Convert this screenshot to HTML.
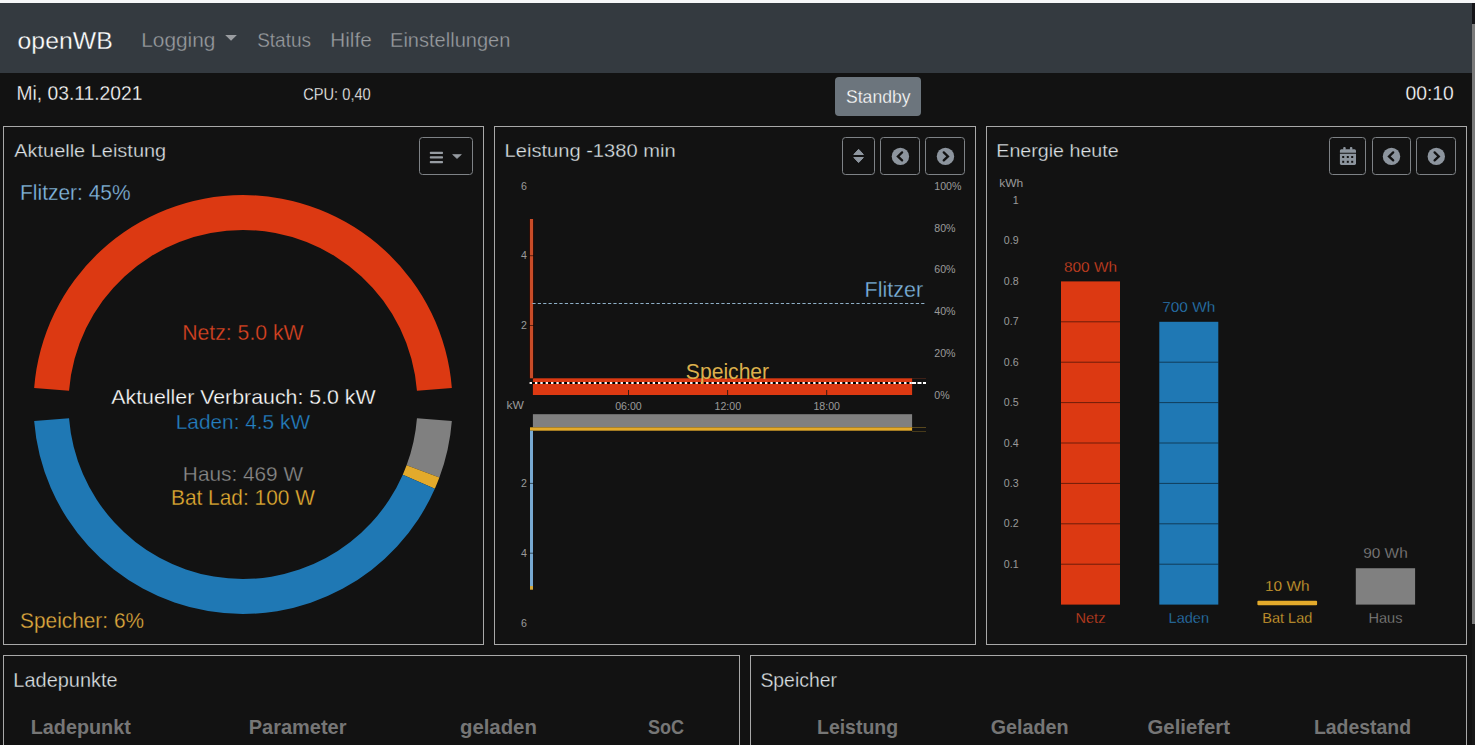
<!DOCTYPE html>
<html lang="de"><head><meta charset="utf-8"><title>openWB</title>
<style>
html,body{margin:0;padding:0;background:#121212;overflow:hidden;}
body{width:1475px;height:745px;position:relative;font-family:"Liberation Sans",sans-serif;}
.abs{position:absolute;box-sizing:border-box;}
.topstrip{left:0;top:0;width:1475px;height:3px;background:#f6f7f9;}
nav.navbar{left:0;top:3px;width:1472px;height:70px;background:#343a40;}
.scroll-track-top{left:1472px;top:3px;width:3px;height:21px;background:#141418;}
.scroll-thumb{left:1472px;top:24px;width:3px;height:600px;background:#7a7a7a;}
.scroll-track{left:1472px;top:624px;width:3px;height:121px;background:#171717;}
.standby{left:835px;top:77px;width:86px;height:39px;border-radius:4px;background:#6c757d;}
.card{border:1px solid #a8a8a8;background:transparent;}
svg{position:absolute;left:0;top:0;font-family:"Liberation Sans",sans-serif;}
</style></head><body>
<div class="abs topstrip"></div>
<nav class="abs navbar"></nav>
<div class="abs scroll-track-top"></div><div class="abs scroll-thumb"></div><div class="abs scroll-track"></div>
<div class="abs standby"></div>
<div class="abs card" style="left:3px;top:126px;width:481px;height:519px"></div>
<div class="abs card" style="left:494px;top:126px;width:482px;height:519px"></div>
<div class="abs card" style="left:986px;top:126px;width:481px;height:519px"></div>
<div class="abs card" style="left:3px;top:655px;width:737px;height:120px"></div>
<div class="abs card" style="left:750px;top:655px;width:717px;height:120px"></div>
<svg width="1475" height="745" viewBox="0 0 1475 745">
<text x="17.56" y="49.00" font-size="24.71" fill="#ffffff" text-anchor="start" font-weight="normal" textLength="95.15" lengthAdjust="spacingAndGlyphs" stroke="#343a40" stroke-width="0.3">openWB</text>
<text x="141.29" y="47.20" font-size="19.48" fill="#9a9da1" text-anchor="start" font-weight="normal" textLength="74.15" lengthAdjust="spacingAndGlyphs" stroke="#343a40" stroke-width="0.3">Logging</text>
<path d="M225.2 34.9 L236.9 34.9 L231.05 40.8 Z" fill="#9a9da1"/>
<text x="257.14" y="47.20" font-size="19.48" fill="#9a9da1" text-anchor="start" font-weight="normal" textLength="53.85" lengthAdjust="spacingAndGlyphs" stroke="#343a40" stroke-width="0.3">Status</text>
<text x="330.30" y="47.20" font-size="19.48" fill="#9a9da1" text-anchor="start" font-weight="normal" textLength="41.42" lengthAdjust="spacingAndGlyphs" stroke="#343a40" stroke-width="0.3">Hilfe</text>
<text x="390.06" y="47.20" font-size="19.48" fill="#9a9da1" text-anchor="start" font-weight="normal" textLength="120.35" lengthAdjust="spacingAndGlyphs" stroke="#343a40" stroke-width="0.3">Einstellungen</text>
<text x="16.54" y="100.30" font-size="19.77" fill="#ffffff" text-anchor="start" font-weight="normal" textLength="125.79" lengthAdjust="spacingAndGlyphs" stroke="#121212" stroke-width="0.3">Mi, 03.11.2021</text>
<text x="303.16" y="99.90" font-size="15.84" fill="#ffffff" text-anchor="start" font-weight="normal" textLength="67.62" lengthAdjust="spacingAndGlyphs" stroke="#121212" stroke-width="0.3">CPU: 0,40</text>
<text x="1405.45" y="99.80" font-size="19.77" fill="#ffffff" text-anchor="start" font-weight="normal" textLength="48.31" lengthAdjust="spacingAndGlyphs" stroke="#121212" stroke-width="0.3">00:10</text>
<text x="846.00" y="103.20" font-size="18.90" fill="#ffffff" text-anchor="start" font-weight="normal" textLength="64.53" lengthAdjust="spacingAndGlyphs" stroke="#6c757d" stroke-width="0.3">Standby</text>
<text x="14.26" y="157.00" font-size="18.90" fill="#dee2e6" text-anchor="start" font-weight="normal" textLength="151.92" lengthAdjust="spacingAndGlyphs" stroke="#121212" stroke-width="0.3">Aktuelle Leistung</text>
<text x="504.55" y="156.70" font-size="18.90" fill="#dee2e6" text-anchor="start" font-weight="normal" textLength="171.06" lengthAdjust="spacingAndGlyphs" stroke="#121212" stroke-width="0.3">Leistung -1380 min</text>
<text x="996.29" y="156.70" font-size="18.90" fill="#dee2e6" text-anchor="start" font-weight="normal" textLength="122.39" lengthAdjust="spacingAndGlyphs" stroke="#121212" stroke-width="0.3">Energie heute</text>
<rect x="419.5" y="137.5" width="53" height="37" rx="3" fill="none" stroke="#7e8286" stroke-width="1"/>
<rect x="429.8" y="151.70000000000002" width="13.2" height="2.2" fill="#979ca2" rx="0.7"/>
<rect x="429.8" y="156.20000000000002" width="13.2" height="2.2" fill="#979ca2" rx="0.7"/>
<rect x="429.8" y="161.0" width="13.2" height="2.2" fill="#979ca2" rx="0.7"/>
<path d="M452.6 154.5 L461.4 154.5 L457 158.6 Z" fill="#979ca2" stroke="#979ca2" stroke-width="0.6" stroke-linejoin="round"/>
<rect x="842.5" y="137.5" width="32" height="37" rx="3" fill="none" stroke="#7e8286" stroke-width="1"/>
<rect x="880.5" y="137.5" width="39" height="37" rx="3" fill="none" stroke="#7e8286" stroke-width="1"/>
<rect x="925.5" y="137.5" width="39" height="37" rx="3" fill="none" stroke="#7e8286" stroke-width="1"/>
<path d="M853.8 154.5 L863.4 154.5 L858.6 149.3 Z M853.8 157.5 L863.4 157.5 L858.6 162.6 Z" fill="#8d959e" stroke="#8d959e" stroke-width="1" stroke-linejoin="round"/>
<circle cx="900.4" cy="156.4" r="8.7" fill="#8d959e"/>
<path d="M902.10 152.40 L897.90 156.40 L902.10 160.40" fill="none" stroke="#121212" stroke-width="2.3" stroke-linecap="round" stroke-linejoin="miter"/>
<circle cx="945.45" cy="156.4" r="8.7" fill="#8d959e"/>
<path d="M943.75 152.40 L947.95 156.40 L943.75 160.40" fill="none" stroke="#121212" stroke-width="2.3" stroke-linecap="round" stroke-linejoin="miter"/>
<rect x="1329.5" y="137.5" width="36" height="37" rx="3" fill="none" stroke="#7e8286" stroke-width="1"/>
<rect x="1372.5" y="137.5" width="38" height="37" rx="3" fill="none" stroke="#7e8286" stroke-width="1"/>
<rect x="1416.5" y="137.5" width="39" height="37" rx="3" fill="none" stroke="#7e8286" stroke-width="1"/>
<circle cx="1391.5" cy="156.4" r="8.7" fill="#8d959e"/>
<path d="M1393.20 152.40 L1389.00 156.40 L1393.20 160.40" fill="none" stroke="#121212" stroke-width="2.3" stroke-linecap="round" stroke-linejoin="miter"/>
<circle cx="1436.3" cy="156.4" r="8.7" fill="#8d959e"/>
<path d="M1434.60 152.40 L1438.80 156.40 L1434.60 160.40" fill="none" stroke="#121212" stroke-width="2.3" stroke-linecap="round" stroke-linejoin="miter"/>
<path d="M1339.9 150.8 a1.5 1.5 0 0 1 1.5 -1.5 h13.1 a1.5 1.5 0 0 1 1.5 1.5 v2.0 h-16.1 Z" fill="#8d959e"/>
<path d="M1339.9 153.8 h16.1 v9.8 a1.4 1.4 0 0 1 -1.4 1.4 h-13.3 a1.4 1.4 0 0 1 -1.4 -1.4 Z" fill="#8d959e"/>
<rect x="1343.2" y="147" width="2.5" height="3" rx="1" fill="#8d959e"/>
<rect x="1349.9" y="147" width="2.5" height="3" rx="1" fill="#8d959e"/>
<rect x="1342.2" y="156.0" width="2.0" height="2.0" fill="#121212"/>
<rect x="1342.2" y="160.8" width="2.0" height="2.0" fill="#121212"/>
<rect x="1346.8" y="156.0" width="2.0" height="2.0" fill="#121212"/>
<rect x="1346.8" y="160.8" width="2.0" height="2.0" fill="#121212"/>
<rect x="1351.2" y="156.0" width="2.0" height="2.0" fill="#121212"/>
<rect x="1351.2" y="160.8" width="2.0" height="2.0" fill="#121212"/>
<path d="M451.85 388.06 A209.5 209.5 0 0 0 34.15 388.06 L69.04 390.81 A174.5 174.5 0 0 1 416.96 390.81 Z" fill="#dc3912"/>
<path d="M451.85 420.94 A209.5 209.5 0 0 1 439.36 477.53 L406.56 465.33 A174.5 174.5 0 0 0 416.96 418.19 Z" fill="#808080"/>
<path d="M439.36 477.53 A209.5 209.5 0 0 1 434.83 488.71 L402.78 474.64 A174.5 174.5 0 0 0 406.56 465.33 Z" fill="#e3aa2b"/>
<path d="M434.83 488.71 A209.5 209.5 0 0 1 34.15 420.94 L69.04 418.19 A174.5 174.5 0 0 0 402.78 474.64 Z" fill="#1f78b4"/>
<text x="20.08" y="200.00" font-size="22.53" fill="#84b9e0" text-anchor="start" font-weight="normal" textLength="110.46" lengthAdjust="spacingAndGlyphs" stroke="#121212" stroke-width="0.3">Flitzer: 45%</text>
<text x="20.05" y="628.00" font-size="22.97" fill="#e0ab3e" text-anchor="start" font-weight="normal" textLength="123.99" lengthAdjust="spacingAndGlyphs" stroke="#121212" stroke-width="0.3">Speicher: 6%</text>
<text x="182.26" y="339.60" font-size="21.51" fill="#dc4422" text-anchor="start" font-weight="normal" textLength="121.31" lengthAdjust="spacingAndGlyphs" stroke="#121212" stroke-width="0.3">Netz: 5.0 kW</text>
<text x="111.26" y="404.40" font-size="20.49" fill="#ffffff" text-anchor="start" font-weight="normal" textLength="264.41" lengthAdjust="spacingAndGlyphs" stroke="#121212" stroke-width="0.3">Aktueller Verbrauch: 5.0 kW</text>
<text x="175.79" y="429.20" font-size="20.93" fill="#2580c3" text-anchor="start" font-weight="normal" textLength="134.28" lengthAdjust="spacingAndGlyphs" stroke="#121212" stroke-width="0.3">Laden: 4.5 kW</text>
<text x="182.89" y="480.50" font-size="20.49" fill="#8a8a8a" text-anchor="start" font-weight="normal" textLength="120.18" lengthAdjust="spacingAndGlyphs" stroke="#121212" stroke-width="0.3">Haus: 469 W</text>
<text x="170.99" y="505.30" font-size="21.80" fill="#e3ad33" text-anchor="start" font-weight="normal" textLength="143.88" lengthAdjust="spacingAndGlyphs" stroke="#121212" stroke-width="0.3">Bat Lad: 100 W</text>
<text x="527.00" y="190.00" font-size="10.61" fill="#9a9a9a" text-anchor="end" font-weight="normal">6</text>
<text x="527.00" y="259.10" font-size="10.61" fill="#9a9a9a" text-anchor="end" font-weight="normal">4</text>
<text x="527.00" y="328.80" font-size="10.61" fill="#9a9a9a" text-anchor="end" font-weight="normal">2</text>
<text x="527.00" y="487.30" font-size="10.61" fill="#9a9a9a" text-anchor="end" font-weight="normal">2</text>
<text x="527.00" y="557.40" font-size="10.61" fill="#9a9a9a" text-anchor="end" font-weight="normal">4</text>
<text x="527.00" y="627.00" font-size="10.61" fill="#9a9a9a" text-anchor="end" font-weight="normal">6</text>
<text x="506.59" y="409.00" font-size="10.61" fill="#9a9a9a" text-anchor="start" font-weight="normal" textLength="17.35" lengthAdjust="spacingAndGlyphs">kW</text>
<text x="934.30" y="190.10" font-size="10.61" fill="#9a9a9a" text-anchor="start" font-weight="normal">100%</text>
<text x="934.30" y="231.50" font-size="10.61" fill="#9a9a9a" text-anchor="start" font-weight="normal">80%</text>
<text x="934.30" y="273.40" font-size="10.61" fill="#9a9a9a" text-anchor="start" font-weight="normal">60%</text>
<text x="934.30" y="315.20" font-size="10.61" fill="#9a9a9a" text-anchor="start" font-weight="normal">40%</text>
<text x="934.30" y="357.10" font-size="10.61" fill="#9a9a9a" text-anchor="start" font-weight="normal">20%</text>
<text x="934.30" y="398.90" font-size="10.61" fill="#9a9a9a" text-anchor="start" font-weight="normal">0%</text>
<text x="628.50" y="409.90" font-size="10.61" fill="#9a9a9a" text-anchor="middle" font-weight="normal">06:00</text>
<text x="727.80" y="409.90" font-size="10.61" fill="#9a9a9a" text-anchor="middle" font-weight="normal">12:00</text>
<text x="826.70" y="409.90" font-size="10.61" fill="#9a9a9a" text-anchor="middle" font-weight="normal">18:00</text>
<rect x="532.9" y="378.3" width="379.2" height="16.7" fill="#dc3912"/>
<rect x="529.3" y="219" width="4.4" height="159.3" fill="#3a0c02"/>
<rect x="530" y="219" width="3" height="159.3" fill="#c84c28"/>
<line x1="532.4" y1="303.5" x2="925.5" y2="303.5" stroke="#8fb0c8" stroke-width="1" stroke-dasharray="3.2 2.2"/>
<line x1="530" y1="383" x2="912" y2="383" stroke="#000" stroke-width="2"/>
<line x1="529.6" y1="383" x2="912" y2="383" stroke="#fff6f2" stroke-width="2" stroke-dasharray="2.4 2.95"/>
<line x1="912" y1="383" x2="926" y2="383" stroke="#ffffff" stroke-width="2" stroke-dasharray="4 1.5"/>
<rect x="912" y="378" width="14" height="1" fill="#5a2a1a" fill-opacity="0.6"/>
<rect x="912" y="427" width="14" height="1" fill="#6a5520" fill-opacity="0.8"/>
<rect x="912" y="431" width="14" height="1" fill="#6a5520" fill-opacity="0.6"/>
<rect x="532.9" y="414.2" width="379.2" height="13" fill="#808080"/>
<rect x="530" y="427.3" width="382.1" height="3.4" fill="#e3aa2b"/>
<rect x="530" y="430.7" width="3" height="155.3" fill="#78aad2"/>
<rect x="530" y="586" width="3" height="3.7" fill="#d4a83a"/>
<rect x="529.3" y="255.2" width="4.4" height="1" fill="#000" fill-opacity="0.55"/>
<rect x="529.3" y="325.0" width="4.4" height="1" fill="#000" fill-opacity="0.55"/>
<rect x="529.3" y="482.9" width="4.4" height="1" fill="#000" fill-opacity="0.55"/>
<rect x="529.3" y="552.7" width="4.4" height="1" fill="#000" fill-opacity="0.55"/>
<rect x="628.0" y="390" width="1" height="5" fill="#3a1a10"/>
<rect x="727.1" y="390" width="1" height="5" fill="#3a1a10"/>
<rect x="826.2" y="390" width="1" height="5" fill="#3a1a10"/>
<text x="864.54" y="296.90" font-size="21.80" fill="#7db4de" text-anchor="start" font-weight="normal" textLength="58.52" lengthAdjust="spacingAndGlyphs" stroke="#121212" stroke-width="0.3">Flitzer</text>
<text x="685.84" y="378.60" font-size="21.80" fill="#dcb04c" text-anchor="start" font-weight="normal" textLength="83.31" lengthAdjust="spacingAndGlyphs">Speicher</text>
<text x="999.19" y="186.50" font-size="10.76" fill="#9a9a9a" text-anchor="start" font-weight="normal" textLength="24.09" lengthAdjust="spacingAndGlyphs">kWh</text>
<text x="1018.60" y="567.85" font-size="10.61" fill="#9a9a9a" text-anchor="end" font-weight="normal">0.1</text>
<text x="1018.60" y="527.40" font-size="10.61" fill="#9a9a9a" text-anchor="end" font-weight="normal">0.2</text>
<text x="1018.60" y="486.95" font-size="10.61" fill="#9a9a9a" text-anchor="end" font-weight="normal">0.3</text>
<text x="1018.60" y="446.50" font-size="10.61" fill="#9a9a9a" text-anchor="end" font-weight="normal">0.4</text>
<text x="1018.60" y="406.05" font-size="10.61" fill="#9a9a9a" text-anchor="end" font-weight="normal">0.5</text>
<text x="1018.60" y="365.60" font-size="10.61" fill="#9a9a9a" text-anchor="end" font-weight="normal">0.6</text>
<text x="1018.60" y="325.15" font-size="10.61" fill="#9a9a9a" text-anchor="end" font-weight="normal">0.7</text>
<text x="1018.60" y="284.70" font-size="10.61" fill="#9a9a9a" text-anchor="end" font-weight="normal">0.8</text>
<text x="1018.60" y="244.25" font-size="10.61" fill="#9a9a9a" text-anchor="end" font-weight="normal">0.9</text>
<text x="1018.60" y="203.80" font-size="10.61" fill="#9a9a9a" text-anchor="end" font-weight="normal">1</text>
<rect x="1061" y="281.4" width="59" height="323.20000000000005" fill="#dc3912"/>
<text x="1090.50" y="271.60" font-size="15.41" fill="#dc4422" text-anchor="middle" font-weight="normal" stroke="#121212" stroke-width="0.3">800 Wh</text>
<text x="1090.50" y="622.70" font-size="14.54" fill="#dc4422" text-anchor="middle" font-weight="normal" stroke="#121212" stroke-width="0.3">Netz</text>
<rect x="1159.3" y="321.80000000000007" width="59.0" height="282.79999999999995" fill="#1f78b4"/>
<text x="1188.80" y="312.00" font-size="15.41" fill="#2a7fbf" text-anchor="middle" font-weight="normal" stroke="#121212" stroke-width="0.3">700 Wh</text>
<text x="1188.80" y="622.70" font-size="14.54" fill="#2a7fbf" text-anchor="middle" font-weight="normal" stroke="#121212" stroke-width="0.3">Laden</text>
<rect x="1257.4" y="600.8" width="59.69999999999982" height="4.4" rx="1" fill="#e3aa2b"/>
<text x="1287.25" y="590.76" font-size="15.41" fill="#e3ad33" text-anchor="middle" font-weight="normal" stroke="#121212" stroke-width="0.3">10 Wh</text>
<text x="1287.25" y="622.70" font-size="14.54" fill="#e3ad33" text-anchor="middle" font-weight="normal" stroke="#121212" stroke-width="0.3">Bat Lad</text>
<rect x="1355.8" y="568.24" width="59.299999999999955" height="36.360000000000014" fill="#808080"/>
<text x="1385.45" y="558.44" font-size="15.41" fill="#8a8a8a" text-anchor="middle" font-weight="normal" stroke="#121212" stroke-width="0.3">90 Wh</text>
<text x="1385.45" y="622.70" font-size="14.54" fill="#8a8a8a" text-anchor="middle" font-weight="normal" stroke="#121212" stroke-width="0.3">Haus</text>
<rect x="1061" y="563.70" width="59" height="1" fill="#000" fill-opacity="0.5"/>
<rect x="1061" y="523.30" width="59" height="1" fill="#000" fill-opacity="0.5"/>
<rect x="1061" y="482.90" width="59" height="1" fill="#000" fill-opacity="0.5"/>
<rect x="1061" y="442.50" width="59" height="1" fill="#000" fill-opacity="0.5"/>
<rect x="1061" y="402.10" width="59" height="1" fill="#000" fill-opacity="0.5"/>
<rect x="1061" y="361.70" width="59" height="1" fill="#000" fill-opacity="0.5"/>
<rect x="1061" y="321.30" width="59" height="1" fill="#000" fill-opacity="0.5"/>
<rect x="1159.3" y="563.70" width="59.0" height="1" fill="#000" fill-opacity="0.5"/>
<rect x="1159.3" y="523.30" width="59.0" height="1" fill="#000" fill-opacity="0.5"/>
<rect x="1159.3" y="482.90" width="59.0" height="1" fill="#000" fill-opacity="0.5"/>
<rect x="1159.3" y="442.50" width="59.0" height="1" fill="#000" fill-opacity="0.5"/>
<rect x="1159.3" y="402.10" width="59.0" height="1" fill="#000" fill-opacity="0.5"/>
<rect x="1159.3" y="361.70" width="59.0" height="1" fill="#000" fill-opacity="0.5"/>
<text x="13.36" y="686.80" font-size="19.62" fill="#dee2e6" text-anchor="start" font-weight="normal" textLength="104.22" lengthAdjust="spacingAndGlyphs" stroke="#121212" stroke-width="0.3">Ladepunkte</text>
<text x="760.42" y="686.80" font-size="19.62" fill="#dee2e6" text-anchor="start" font-weight="normal" textLength="76.50" lengthAdjust="spacingAndGlyphs" stroke="#121212" stroke-width="0.3">Speicher</text>
<text x="30.78" y="734.00" font-size="19.33" fill="#767676" text-anchor="start" font-weight="bold" textLength="99.96" lengthAdjust="spacingAndGlyphs">Ladepunkt</text>
<text x="248.76" y="734.00" font-size="19.33" fill="#767676" text-anchor="start" font-weight="bold" textLength="97.74" lengthAdjust="spacingAndGlyphs">Parameter</text>
<text x="459.97" y="734.00" font-size="19.33" fill="#767676" text-anchor="start" font-weight="bold" textLength="76.90" lengthAdjust="spacingAndGlyphs">geladen</text>
<text x="647.98" y="734.00" font-size="19.33" fill="#767676" text-anchor="start" font-weight="bold" textLength="36.11" lengthAdjust="spacingAndGlyphs">SoC</text>
<text x="817.00" y="734.00" font-size="19.33" fill="#767676" text-anchor="start" font-weight="bold" textLength="81.10" lengthAdjust="spacingAndGlyphs">Leistung</text>
<text x="990.79" y="734.00" font-size="19.33" fill="#767676" text-anchor="start" font-weight="bold" textLength="77.83" lengthAdjust="spacingAndGlyphs">Geladen</text>
<text x="1147.57" y="734.00" font-size="19.33" fill="#767676" text-anchor="start" font-weight="bold" textLength="82.38" lengthAdjust="spacingAndGlyphs">Geliefert</text>
<text x="1313.90" y="734.00" font-size="19.33" fill="#767676" text-anchor="start" font-weight="bold" textLength="97.18" lengthAdjust="spacingAndGlyphs">Ladestand</text>
</svg>
</body></html>
